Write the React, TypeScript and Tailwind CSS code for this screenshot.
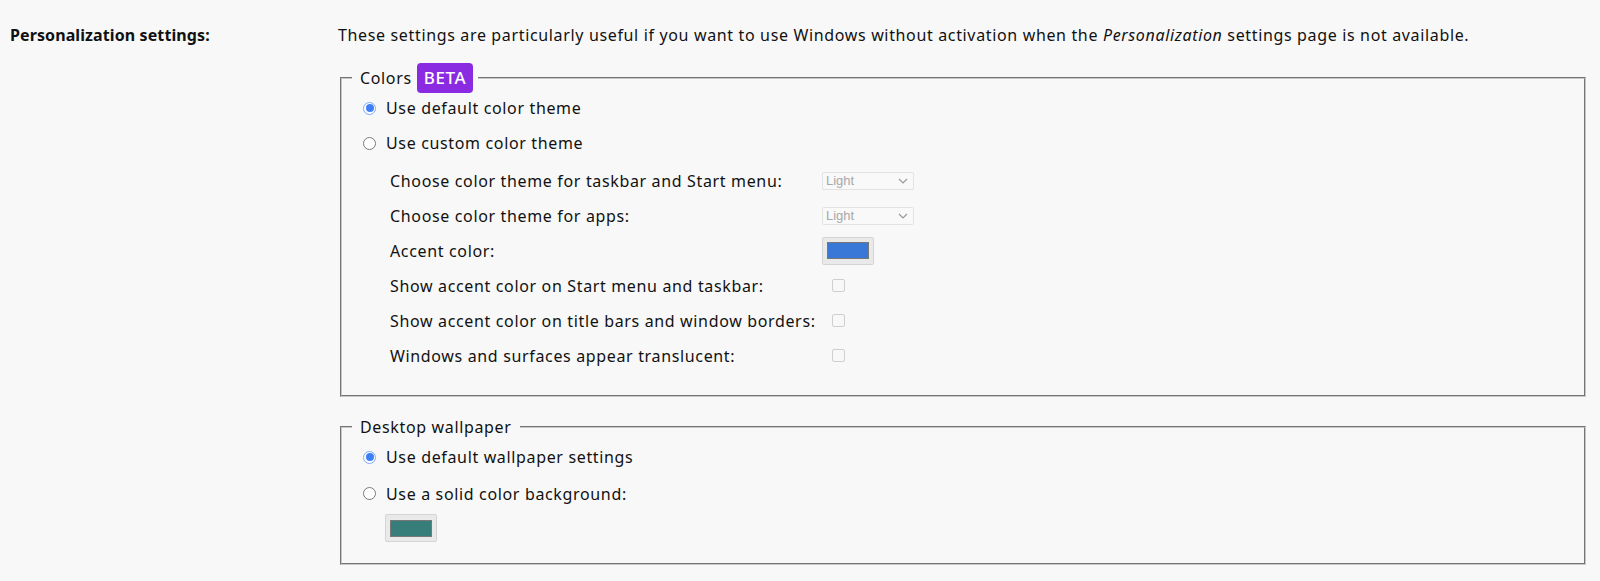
import React from "react"

const subRows = [
  { label: "Choose color theme for taskbar and Start menu:", control: "select" },
  { label: "Choose color theme for apps:", control: "select" },
  { label: "Accent color:", control: "color" },
  { label: "Show accent color on Start menu and taskbar:", control: "checkbox" },
  { label: "Show accent color on title bars and window borders:", control: "checkbox" },
  { label: "Windows and surfaces appear translucent:", control: "checkbox" },
]

function Radio({ checked }: { checked?: boolean }) {
  if (checked) {
    return (
      <span className="flex h-[13px] w-[13px] shrink-0 items-center justify-center rounded-full border-[1.5px] border-[#80aaf8] bg-white">
        <span className="h-[8px] w-[8px] rounded-full bg-[#3f7ff6]" />
      </span>
    )
  }
  return <span className="h-[13px] w-[13px] shrink-0 rounded-full border border-[#7a7a7a] bg-white" />
}

function FakeSelect() {
  return (
    <div className="flex h-[18px] w-[92px] items-center justify-between rounded-[2px] border border-[#e3e3e3] bg-[#f9f9f9] pl-[3px] pr-[5px] font-['Liberation_Sans',sans-serif] text-[13px] tracking-normal text-[#a8a8a8]">
      <span>Light</span>
      <svg width="10" height="6" viewBox="0 0 10 6" fill="none">
        <path d="M1 1l4 4 4-4" stroke="#9a9a9a" strokeWidth="1.2" />
      </svg>
    </div>
  )
}

function ColorButton({ color }: { color: string }) {
  return (
    <div className="flex h-[28px] w-[52px] items-center justify-center rounded-[2px] border border-[#d4d4d4] bg-[#e9e9e9]">
      <div className="h-[17px] w-[42px] border border-[#777]" style={{ backgroundColor: color }} />
    </div>
  )
}

function Checkbox() {
  return <div className="ml-[10px] h-[13px] w-[13px] rounded-[2px] border border-[#cfcfcf] bg-[#f8f8f8]" />
}

export default function App() {
  return (
    <div className="min-h-screen bg-[#f8f8f8] font-['Noto_Sans',sans-serif] text-[16px] leading-[24px] text-[#111]">
      <div className="flex pt-[23px] pr-[12px]">
        <div className="w-[338px] shrink-0 pl-[10px] font-bold tracking-[0.1px]">Personalization settings:</div>
        <div className="flex-1 tracking-[0.65px]">
          <p>
            These settings are particularly useful if you want to use Windows without activation when the{" "}
            <i>Personalization</i> settings page is not available.
          </p>

          <fieldset className="mx-[2px] mt-[16px] border-2 border-[#c8c8c8] [border-style:groove] pl-[10px] pb-[22px]">
            <legend className="flex items-center px-[8px]">
              <span>Colors</span>
              <span className="ml-[5px] mr-[-3px] flex h-[30px] items-center rounded-[4px] bg-[#8a2be2] px-[7px] text-[17px] font-medium tracking-[0.6px] text-white">
                BETA
              </span>
            </legend>
            <label className="flex h-[30px] items-center gap-[10px] pl-[11px]">
              <Radio checked />
              <span>Use default color theme</span>
            </label>
            <label className="mt-[5px] flex h-[30px] items-center gap-[10px] pl-[11px]">
              <Radio />
              <span>Use custom color theme</span>
            </label>
            <div className="mt-[5px] pl-[38px]">
              {subRows.map((row) => (
                <div key={row.label} className="flex h-[35px] items-center">
                  <span className="w-[432px] shrink-0">{row.label}</span>
                  {row.control === "select" && <FakeSelect />}
                  {row.control === "color" && <ColorButton color="#3a78d8" />}
                  {row.control === "checkbox" && <Checkbox />}
                </div>
              ))}
            </div>
          </fieldset>

          <fieldset className="mx-[2px] mt-[18px] border-2 border-[#c8c8c8] [border-style:groove] pl-[10px] pb-[21px]">
            <legend className="px-[8px]">Desktop wallpaper</legend>
            <label className="flex h-[36px] items-center gap-[10px] pl-[11px]">
              <Radio checked />
              <span>Use default wallpaper settings</span>
            </label>
            <label className="flex h-[37px] items-center gap-[10px] pl-[11px]">
              <Radio />
              <span>Use a solid color background:</span>
            </label>
            <div className="mt-[2px] pl-[33px]">
              <ColorButton color="#377e7b" />
            </div>
          </fieldset>
        </div>
      </div>
    </div>
  )
}
